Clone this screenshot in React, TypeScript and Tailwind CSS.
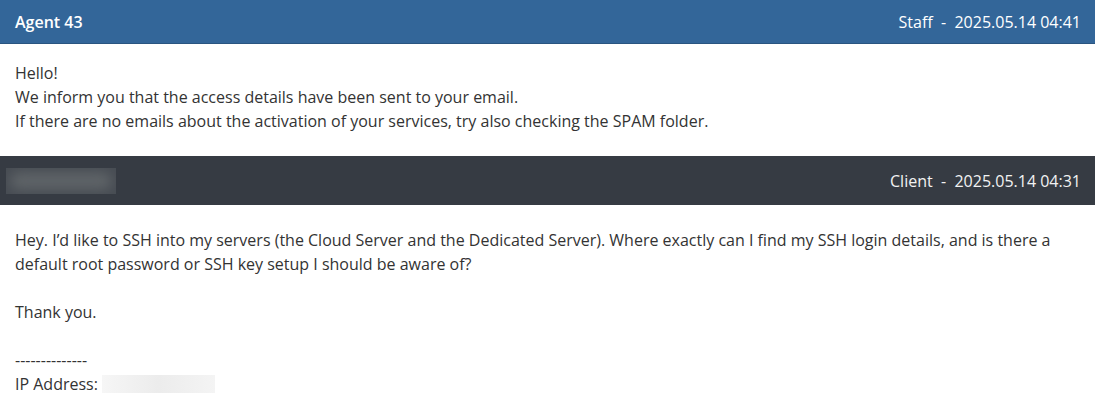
export default function App() {
  return (
    <div className="w-[1095px] h-[403px] overflow-hidden bg-white font-['Open_Sans',sans-serif] text-[16px] text-[#333333]">
      {/* Staff reply */}
      <div className="flex h-[44px] items-center justify-between border-b border-[#2a5580] bg-[#336699] pl-[15px] pr-[14px] text-white">
        <span className="font-semibold">Agent 43</span>
        <span className="whitespace-pre">Staff  -  2025.05.14 04:41</span>
      </div>
      <div className="px-[15px] pt-[17px] pb-[23px] leading-[24px]">
        Hello!
        <br />
        We inform you that the access details have been sent to your email.
        <br />
        If there are no emails about the activation of your services, try also checking the SPAM folder.
      </div>

      {/* Client message */}
      <div className="flex h-[49px] items-center justify-between bg-[#363b43] pl-[6px] pr-[14px] text-[#f2f2f2]">
        <div className="h-[26px] w-[110px] overflow-hidden bg-[#474c53]">
          <div className="m-[4px] h-[18px] w-[102px] rounded-full bg-[#5e6367] blur-[6px]" />
        </div>
        <span className="whitespace-pre">Client  -  2025.05.14 04:31</span>
      </div>
      <div className="px-[15px] pt-[23px] leading-[24px]">
        Hey. I’d like to SSH into my servers (the Cloud Server and the Dedicated Server). Where exactly can I find my SSH login details, and is there a default root password or SSH key setup I should be aware of?
        <br />
        <br />
        Thank you.
        <br />
        <br />
        --------------
        <br />
        <span className="inline-flex items-center">
          IP Address:&nbsp;
          <span className="inline-block h-[18px] w-[113px] bg-gradient-to-r from-[#f6f6f6] via-[#ececec] to-[#f4f4f4] align-middle" />
        </span>
      </div>
    </div>
  );
}
